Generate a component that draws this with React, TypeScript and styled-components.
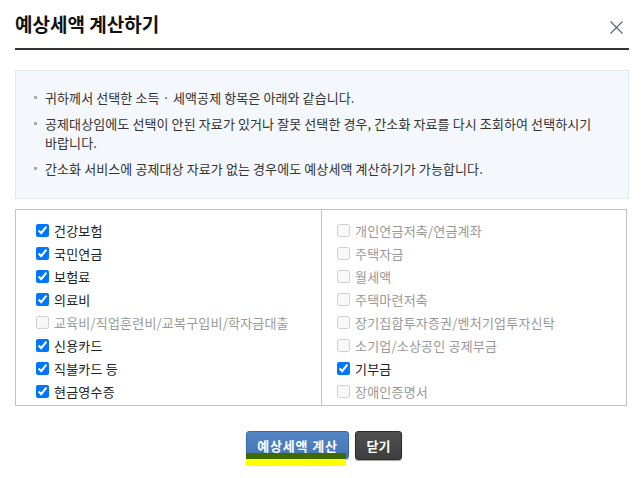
import styled, { createGlobalStyle } from "styled-components";

const GlobalStyle = createGlobalStyle`
  html, body {
    margin: 0;
    padding: 0;
    background: #fff;
  }
  body {
    font-family: "Noto Sans CJK KR", "Noto Sans", sans-serif;
    color: #222;
  }
`;

const notices = [
  ["귀하께서 선택한 소득 · 세액공제 항목은 아래와 같습니다."],
  [
    "공제대상임에도 선택이 안된 자료가 있거나 잘못 선택한 경우, 간소화 자료를 다시 조회하여 선택하시기",
    "바랍니다.",
  ],
  ["간소화 서비스에 공제대상 자료가 없는 경우에도 예상세액 계산하기가 가능합니다."],
];

type Item = { label: string; checked: boolean };

const leftItems: Item[] = [
  { label: "건강보험", checked: true },
  { label: "국민연금", checked: true },
  { label: "보험료", checked: true },
  { label: "의료비", checked: true },
  { label: "교육비/직업훈련비/교복구입비/학자금대출", checked: false },
  { label: "신용카드", checked: true },
  { label: "직불카드 등", checked: true },
  { label: "현금영수증", checked: true },
];

const rightItems: Item[] = [
  { label: "개인연금저축/연금계좌", checked: false },
  { label: "주택자금", checked: false },
  { label: "월세액", checked: false },
  { label: "주택마련저축", checked: false },
  { label: "장기집합투자증권/벤처기업투자신탁", checked: false },
  { label: "소기업/소상공인 공제부금", checked: false },
  { label: "기부금", checked: true },
  { label: "장애인증명서", checked: false },
];

function CheckList({ items, right }: { items: Item[]; right?: boolean }) {
  return (
    <Column $right={right}>
      {items.map((item) => (
        <CheckRow key={item.label}>
          <Check type="checkbox" defaultChecked={item.checked} disabled={!item.checked} />
          <Label $disabled={!item.checked}>{item.label}</Label>
        </CheckRow>
      ))}
    </Column>
  );
}

export default function App() {
  return (
    <>
      <GlobalStyle />
      <Modal>
        <Header>
          <Title>예상세액 계산하기</Title>
          <CloseButton aria-label="닫기">
            <svg width="13" height="13" viewBox="0 0 13 13">
              <path d="M0.5 0.5 L12.5 12.5 M12.5 0.5 L0.5 12.5" stroke="#5a5f73" strokeWidth="1.1" />
            </svg>
          </CloseButton>
        </Header>

        <InfoBox>
          {notices.map((lines, i) => (
            <Notice key={i}>
              <Bullet />
              <span>
                {lines.map((line, j) => (
                  <span key={j}>
                    {j > 0 && <br />}
                    {line}
                  </span>
                ))}
              </span>
            </Notice>
          ))}
        </InfoBox>

        <Table>
          <CheckList items={leftItems} />
          <CheckList items={rightItems} right />
        </Table>

        <Buttons>
          <Highlighted>
            <PrimaryButton>예상세액 계산</PrimaryButton>
            <Marker />
          </Highlighted>
          <DarkButton>닫기</DarkButton>
        </Buttons>
      </Modal>
    </>
  );
}

const Modal = styled.div`
  width: 614px;
  min-height: 478px;
  padding: 0 15px;
  box-sizing: content-box;
`;

const Header = styled.div`
  height: 48px;
  display: flex;
  align-items: center;
  justify-content: space-between;
  border-bottom: 2px solid #333;
  margin-bottom: 20px;
`;

const Title = styled.h1`
  margin: 0;
  padding-bottom: 2px;
  font-size: 19px;
  font-weight: 700;
  color: #111;
`;

const CloseButton = styled.button`
  border: 0;
  background: none;
  padding: 0;
  margin: 6px 0 0 0;
  width: 26px;
  height: 26px;
  display: flex;
  align-items: center;
  justify-content: center;
  cursor: pointer;
`;

const InfoBox = styled.ul`
  list-style: none;
  margin: 0 0 10px;
  padding: 17px 18px 20px 18px;
  background: #f4f7fc;
  border: 1px solid #e2e8f1;
`;

const Notice = styled.li`
  display: flex;
  align-items: flex-start;
  font-size: 13px;
  line-height: 19px;
  color: #333;
  letter-spacing: 0.1px;
  & + & {
    margin-top: 7px;
  }
`;

const Bullet = styled.span`
  flex: none;
  width: 3px;
  height: 3px;
  margin: 8px 8px 0 0;
  background: #aaa;
`;

const Table = styled.div`
  display: grid;
  grid-template-columns: 305px 1fr;
  border: 1px solid #c3c3c3;
  margin-right: 2px;
`;

const Column = styled.div<{ $right?: boolean }>`
  padding: 9px 0 2px ${(p) => (p.$right ? "15px" : "20px")};
  border-left: ${(p) => (p.$right ? "1px solid #c3c3c3" : "none")};
`;

const CheckRow = styled.label`
  display: flex;
  align-items: center;
  height: 23px;
`;

const Check = styled.input`
  width: 13px;
  height: 13px;
  margin: 0 5px 0 0;
  accent-color: #0075ff;
`;

const Label = styled.span<{ $disabled?: boolean }>`
  font-size: 13px;
  color: ${(p) => (p.$disabled ? "#999" : "#222")};
  letter-spacing: 0.2px;
`;

const Buttons = styled.div`
  display: flex;
  justify-content: center;
  gap: 6px;
  margin-top: 25px;
  padding-left: 4px;
`;

const Highlighted = styled.div`
  position: relative;
`;

const PrimaryButton = styled.button`
  display: block;
  width: 103px;
  height: 28px;
  padding: 0;
  border: 1px solid #3c68a3;
  border-radius: 3px;
  background: linear-gradient(#5486c6, #4474b3);
  color: #fff;
  font-family: inherit;
  font-size: 13px;
  font-weight: 700;
  letter-spacing: 0.8px;
  box-shadow: 0 1px 1px rgba(0, 0, 0, 0.35);
`;

const Marker = styled.span`
  position: absolute;
  left: 0;
  top: 22px;
  width: 100px;
  height: 13px;
  background: linear-gradient(#3d6b00 0 6px, #ffff00 6px);
  pointer-events: none;
`;

const DarkButton = styled.button`
  width: 47px;
  height: 29px;
  padding: 0;
  border: 1px solid #2a2a2a;
  border-radius: 3px;
  background: linear-gradient(#505050, #3e3e3e);
  color: #fff;
  font-family: inherit;
  font-size: 13px;
  font-weight: 700;
  box-shadow: 0 1px 1px rgba(0, 0, 0, 0.35);
`;
